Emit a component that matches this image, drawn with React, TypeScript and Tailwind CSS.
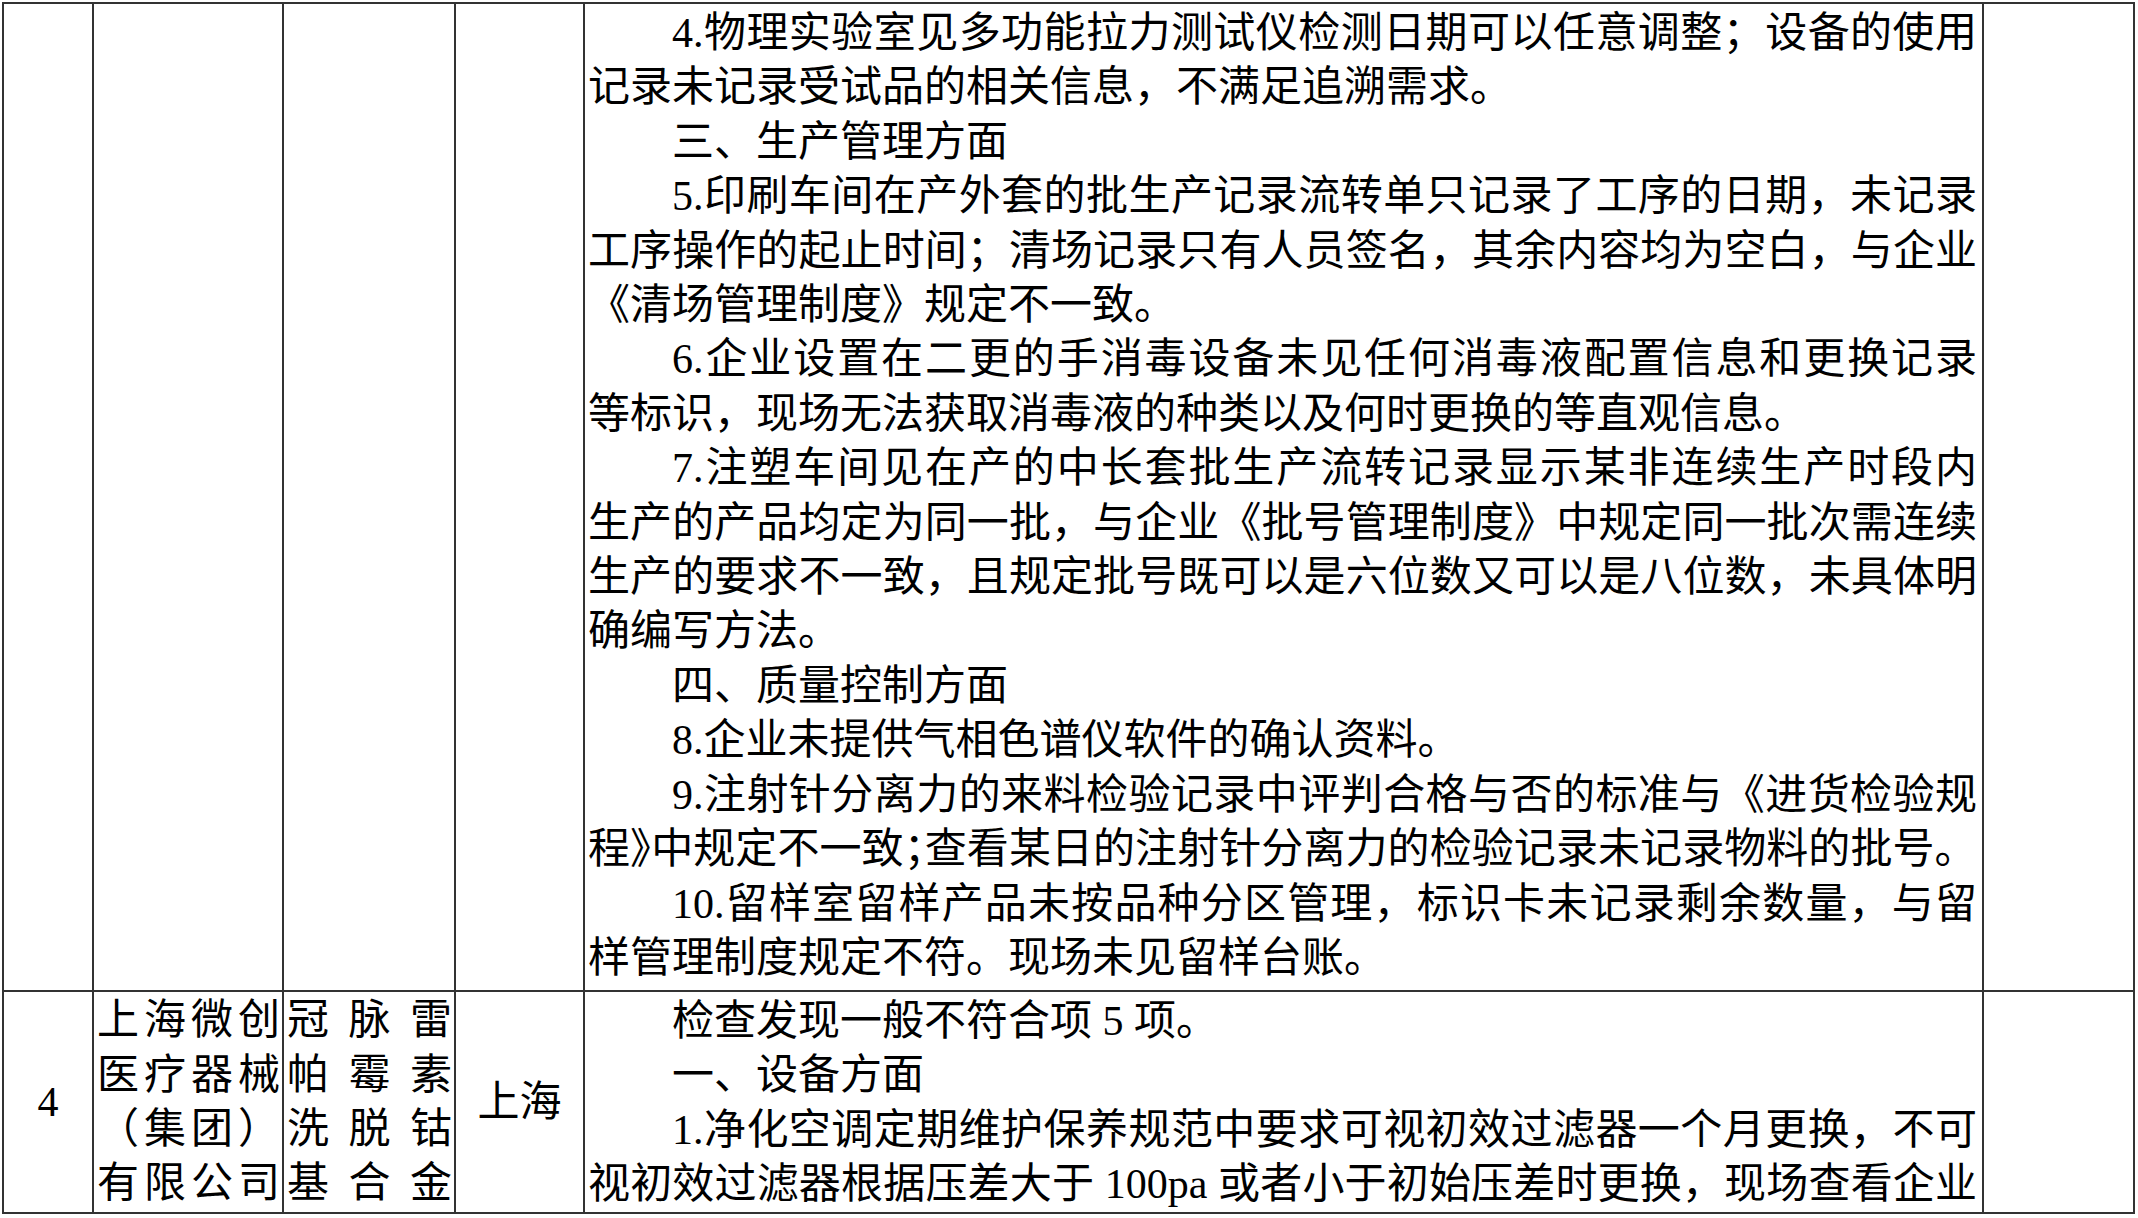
import React from 'react';

type LineProps = {
  text: string;
  indent?: boolean;
  justify?: boolean;
  tight?: boolean;
};

// punctuation that gets its empty half squeezed out on crowded lines
const SQUEEZE = '，；》、：';

function renderText(text: string, tight?: boolean) {
  if (!tight) return text;
  const chars = Array.from(text);
  return chars.map((ch, i) => {
    if (SQUEEZE.includes(ch)) {
      return (
        <span key={i} className="tracking-[-0.5em]">
          {ch}
        </span>
      );
    }
    return <React.Fragment key={i}>{ch}</React.Fragment>;
  });
}

const Line: React.FC<LineProps> = ({ text, indent, justify, tight }) => (
  <div
    className={`${indent ? 'indent-[2em]' : ''} ${
      justify ? 'text-justify [text-align-last:justify]' : 'text-left'
    }`}
  >
    {renderText(text, tight)}
  </div>
);

const continuedLines: LineProps[] = [
  { text: '4.物理实验室见多功能拉力测试仪检测日期可以任意调整；设备的使用', indent: true, justify: true },
  { text: '记录未记录受试品的相关信息，不满足追溯需求。' },
  { text: '三、生产管理方面', indent: true },
  { text: '5.印刷车间在产外套的批生产记录流转单只记录了工序的日期，未记录', indent: true, justify: true },
  { text: '工序操作的起止时间；清场记录只有人员签名，其余内容均为空白，与企业', justify: true },
  { text: '《清场管理制度》规定不一致。' },
  { text: '6.企业设置在二更的手消毒设备未见任何消毒液配置信息和更换记录', indent: true, justify: true },
  { text: '等标识，现场无法获取消毒液的种类以及何时更换的等直观信息。' },
  { text: '7.注塑车间见在产的中长套批生产流转记录显示某非连续生产时段内', indent: true, justify: true },
  { text: '生产的产品均定为同一批，与企业《批号管理制度》中规定同一批次需连续', justify: true },
  { text: '生产的要求不一致，且规定批号既可以是六位数又可以是八位数，未具体明', justify: true },
  { text: '确编写方法。' },
  { text: '四、质量控制方面', indent: true },
  { text: '8.企业未提供气相色谱仪软件的确认资料。', indent: true },
  { text: '9.注射针分离力的来料检验记录中评判合格与否的标准与《进货检验规', indent: true, justify: true },
  { text: '程》中规定不一致；查看某日的注射针分离力的检验记录未记录物料的批号。', justify: true, tight: true },
  { text: '10.留样室留样产品未按品种分区管理，标识卡未记录剩余数量，与留', indent: true, justify: true },
  { text: '样管理制度规定不符。现场未见留样台账。' },
];

const row4Lines: LineProps[] = [
  { text: '检查发现一般不符合项 5 项。', indent: true },
  { text: '一、设备方面', indent: true },
  { text: '1.净化空调定期维护保养规范中要求可视初效过滤器一个月更换，不可', indent: true, justify: true },
  { text: '视初效过滤器根据压差大于 100pa 或者小于初始压差时更换，现场查看企业', justify: true },
];

const company = ['上海微创', '医疗器械', '（集团）', '有限公司'];
const product = ['冠脉雷', '帕霉素', '洗脱钴', '基合金'];

const cell = 'border-2 border-[#333] p-0';

export default function App() {
  return (
    <div className="min-h-screen bg-white text-black">
      <div className="pl-[2px] pt-[2px]">
        <table className="w-[2131px] table-fixed border-collapse font-['Liberation_Serif','Noto_Sans_CJK_SC',serif] text-[42px] leading-[54.4px]">
          <colgroup>
            <col className="w-[90px]" />
            <col className="w-[190px]" />
            <col className="w-[172px]" />
            <col className="w-[129px]" />
            <col className="w-[1399px]" />
            <col className="w-[151px]" />
          </colgroup>
          <tbody>
            {/* continued from previous page */}
            <tr className="h-[988px]">
              <td className={cell} />
              <td className={cell} />
              <td className={cell} />
              <td className={cell} />
              <td className={`${cell} align-top pl-[3px] pr-[5px] pt-[2px]`}>
                {continuedLines.map((l, i) => (
                  <Line key={i} {...l} />
                ))}
              </td>
              <td className={cell} />
            </tr>

            <tr className="h-[222px]">
              <td className={`${cell} text-center align-middle`}>4</td>
              <td className={`${cell} align-middle pl-[3px] pr-[2px]`}>
                {company.map((t) => (
                  <Line key={t} text={t} justify />
                ))}
              </td>
              <td className={`${cell} align-middle pl-[3px] pr-[2px]`}>
                {product.map((t) => (
                  <Line key={t} text={t} justify />
                ))}
              </td>
              <td className={`${cell} text-center align-middle`}>上海</td>
              <td className={`${cell} align-top pl-[3px] pr-[5px] pt-[2px]`}>
                {row4Lines.map((l, i) => (
                  <Line key={i} {...l} />
                ))}
              </td>
              <td className={cell} />
            </tr>
          </tbody>
        </table>
      </div>
    </div>
  );
}
